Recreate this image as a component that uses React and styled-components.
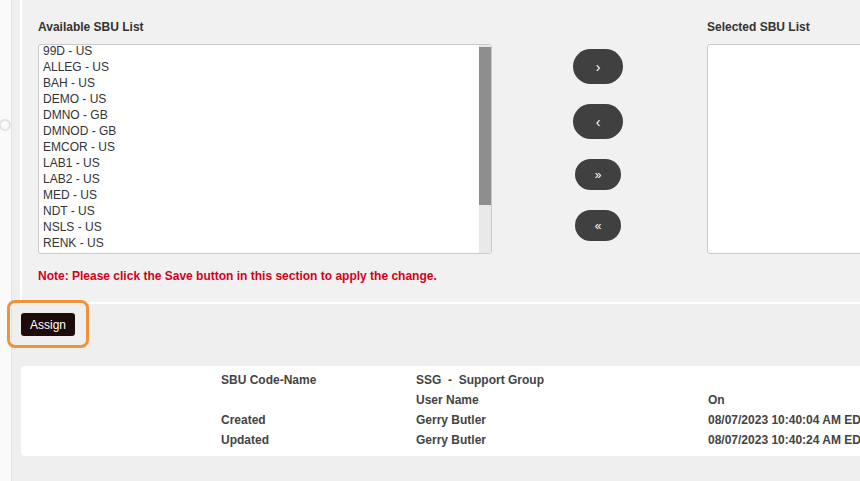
import React from "react"
import styled, { createGlobalStyle } from "styled-components"

const available = [
  "99D - US", "ALLEG - US", "BAH - US", "DEMO - US", "DMNO - GB", "DMNOD - GB",
  "EMCOR - US", "LAB1 - US", "LAB2 - US", "MED - US", "NDT - US", "NSLS - US",
  "RENK - US",
]

const arrows = [
  { glyph: "›", big: true },
  { glyph: "‹", big: true },
  { glyph: "»" },
  { glyph: "«" },
]

const App = () => (
  <>
    <GlobalStyle />
    <Page>
      <Sidebar>
        <Handle />
      </Sidebar>
      <Main>
        <TopPanel>
          <TransferGrid>
            <Label>Available SBU List</Label>
            <span />
            <Label>Selected SBU List</Label>

            <ListBox>
              <Items>
                {available.map(item => (
                  <ListItem key={item}>{item}</ListItem>
                ))}
              </Items>
              <ScrollTrack>
                <ScrollThumb />
              </ScrollTrack>
            </ListBox>
            <ArrowColumn>
              {arrows.map(a => (
                <ArrowButton key={a.glyph} $big={a.big}>{a.glyph}</ArrowButton>
              ))}
            </ArrowColumn>
            <SelectedBox />
          </TransferGrid>
          <Note>Note: Please click the Save button in this section to apply the change.</Note>
        </TopPanel>

        <BottomPanel>
          <AssignWrap>
            <AssignButton>Assign</AssignButton>
            <Highlight />
          </AssignWrap>
          <InfoCard>
            <InfoRow>
              <span />
              <Cell>SBU Code-Name</Cell>
              <Cell>SSG &nbsp;- &nbsp;Support Group</Cell>
              <span />
            </InfoRow>
            <InfoRow>
              <span />
              <span />
              <Cell>User Name</Cell>
              <Cell>On</Cell>
            </InfoRow>
            <InfoRow>
              <span />
              <Cell>Created</Cell>
              <Cell>Gerry Butler</Cell>
              <Cell>08/07/2023 10:40:04 AM EDT</Cell>
            </InfoRow>
            <InfoRow>
              <span />
              <Cell>Updated</Cell>
              <Cell>Gerry Butler</Cell>
              <Cell>08/07/2023 10:40:24 AM EDT</Cell>
            </InfoRow>
          </InfoCard>
        </BottomPanel>
      </Main>
    </Page>
  </>
)

export default App

// GLOBAL
const GlobalStyle = createGlobalStyle`
body {
  margin: 0;
  font-family: "Liberation Sans", Arial, sans-serif;
  background: #efefef;
}
`

// PAGE
const Page = styled.div`
display: flex;
width: 860px;
height: 481px;
overflow: hidden;
`

const Sidebar = styled.div`
flex: 0 0 12px;
background: #fafafa;
border-right: 1px solid #e3e3e3;
padding-top: 119px;
box-sizing: border-box;
`

const Handle = styled.div`
width: 12px;
height: 12px;
margin-left: -1px;
border: 2px solid #e2e2e2;
border-radius: 50%;
box-sizing: border-box;
`

const Main = styled.div`
flex: 1;
min-width: 0;
background: #efefef;
display: flex;
flex-direction: column;
`

// TOP [transfer lists]
const TopPanel = styled.div`
margin-left: 8px;
height: 304px;
box-sizing: border-box;
background: #f1f1f1;
border-left: 2px solid #fff;
border-bottom: 2px solid #fff;
padding: 19px 0 0 16px;
`

const TransferGrid = styled.div`
display: grid;
grid-template-columns: 454px 215px 200px;
row-gap: 9px;
`

const Label = styled.div`
font-size: 12px;
line-height: 16px;
font-weight: 700;
color: #333;
`

const ListBox = styled.div`
height: 210px;
box-sizing: border-box;
border: 1px solid #c9c9c9;
border-radius: 3px;
background: #fff;
display: flex;
overflow: hidden;
`

const Items = styled.div`
flex: 1;
margin-top: -2px;
`

const ListItem = styled.div`
font-size: 12px;
line-height: 16px;
color: #333;
padding-left: 4px;
white-space: nowrap;
`

const ScrollTrack = styled.div`
flex: 0 0 12px;
background: #e9e9e9;
padding-top: 2px;
box-sizing: border-box;
`

const ScrollThumb = styled.div`
height: 158px;
background: #8e8e8e;
`

const ArrowColumn = styled.div`
display: flex;
flex-direction: column;
align-items: center;
padding: 5px 3px 0 0;
gap: 20px;
`

const ArrowButton = styled.button`
width: ${p => (p.$big ? "50px" : "46px")};
height: ${p => (p.$big ? "35px" : "31px")};
border: none;
border-radius: 18px;
background: #404040;
color: #fff;
font-family: "Liberation Sans", Arial, sans-serif;
font-size: ${p => (p.$big ? "14px" : "12px")};
line-height: 1;
padding: 0;
`

const SelectedBox = styled.div`
height: 210px;
box-sizing: border-box;
border: 1px solid #c9c9c9;
border-radius: 3px;
background: #fff;
`

const Note = styled.div`
margin-top: 14px;
font-size: 12px;
line-height: 16px;
font-weight: 700;
color: #d0021b;
`

// BOTTOM [assign + audit]
const BottomPanel = styled.div`
padding: 9px 0 0 9px;
display: flex;
flex-direction: column;
align-items: flex-start;
gap: 30px;
`

const AssignWrap = styled.div`
position: relative;
`

const AssignButton = styled.button`
display: block;
height: 23px;
padding: 0 9px;
border: none;
border-radius: 3px;
background: #1d0b0b;
color: #fff;
font-family: "Liberation Sans", Arial, sans-serif;
font-size: 12px;
`

const Highlight = styled.div`
position: absolute;
left: -14px;
top: -13px;
right: -14px;
bottom: -12px;
border: 3px solid #f0923a;
border-radius: 8px;
pointer-events: none;
`

const InfoCard = styled.div`
align-self: stretch;
margin-right: -40px;
background: #fff;
border-radius: 4px;
padding: 4px 0 6px;
`

const InfoRow = styled.div`
display: grid;
grid-template-columns: 200px 195px 292px 300px;
height: 20px;
align-items: center;
`

const Cell = styled.div`
font-size: 12px;
font-weight: 700;
color: #444;
white-space: nowrap;
`
